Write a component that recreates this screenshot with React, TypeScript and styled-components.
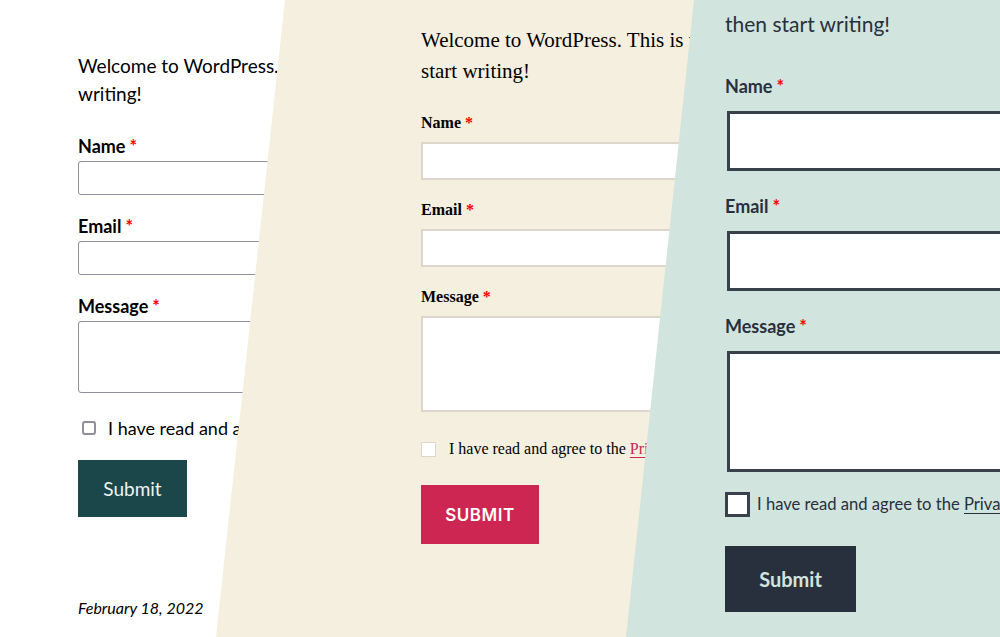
import React from 'react'
import styled, { createGlobalStyle, ThemeProvider } from 'styled-components'

interface FormTheme {
  bg: string
  text: string
  font: string
  padTop: number
  padLeft: number
  bodySize: number
  bodyLine: number
  paraGap: number
  paraWidth: number
  labelSize: number
  labelWeight: number
  labelLine: number
  labelGap: number
  fieldGap: number
  inputHeight: number
  areaHeight: number
  inputBorder: string
  inputRadius: number
  inputOffset: number
  checkGap: number
  checkLine: number
  checkSize: number
  checkBorder: string
  checkRadius: number
  checkOffset: number
  checkTextGap: number
  checkFont: number
  linkColor: string
  buttonGap: number
  buttonBg: string
  buttonColor: string
  buttonFont: string
  buttonSize: number
  buttonWeight: number
  buttonWidth: number
  buttonHeight: number
  buttonCase: string
  buttonSpacing: string
}

const UBUNTU_LIKE = "Lato, 'Open Sans', sans-serif"

const plain: FormTheme = {
  bg: '#ffffff',
  text: '#000000',
  font: UBUNTU_LIKE,
  padTop: 52,
  padLeft: 78,
  bodySize: 19,
  bodyLine: 28,
  paraGap: 27,
  paraWidth: 205,
  labelSize: 18,
  labelWeight: 700,
  labelLine: 22,
  labelGap: 4,
  fieldGap: 20,
  inputHeight: 34,
  areaHeight: 72,
  inputBorder: '1px solid #8f8f9d',
  inputRadius: 3,
  inputOffset: 0,
  checkGap: 23,
  checkLine: 24,
  checkSize: 14,
  checkBorder: '2px solid #8f8f9d',
  checkRadius: 3,
  checkOffset: 4,
  checkTextGap: 12,
  checkFont: 18,
  linkColor: '#000000',
  buttonGap: 20,
  buttonBg: '#1c474a',
  buttonColor: '#eef4f4',
  buttonFont: UBUNTU_LIKE,
  buttonSize: 19,
  buttonWeight: 400,
  buttonWidth: 109,
  buttonHeight: 57,
  buttonCase: 'none',
  buttonSpacing: 'normal',
}

const twenty: FormTheme = {
  bg: '#f5efe0',
  text: '#000000',
  font: "'Liberation Serif', 'Times New Roman', serif",
  padTop: 25,
  padLeft: 421,
  bodySize: 21,
  bodyLine: 31,
  paraGap: 26,
  paraWidth: 270,
  labelSize: 16,
  labelWeight: 700,
  labelLine: 20,
  labelGap: 9,
  fieldGap: 20,
  inputHeight: 38,
  areaHeight: 96,
  inputBorder: '2px solid #dcd7ca',
  inputRadius: 0,
  inputOffset: 0,
  checkGap: 27,
  checkLine: 20,
  checkSize: 15,
  checkBorder: '1px solid #dcd7ca',
  checkRadius: 0,
  checkOffset: 0,
  checkTextGap: 13,
  checkFont: 16,
  linkColor: '#cd2653',
  buttonGap: 26,
  buttonBg: '#cd2653',
  buttonColor: '#ffffff',
  buttonFont: "Inter, 'Liberation Sans', sans-serif",
  buttonSize: 17,
  buttonWeight: 600,
  buttonWidth: 118,
  buttonHeight: 59,
  buttonCase: 'uppercase',
  buttonSpacing: '0.03em',
}

const twentyOne: FormTheme = {
  bg: '#d1e4dd',
  text: '#28303d',
  font: UBUNTU_LIKE,
  padTop: 7,
  padLeft: 725,
  bodySize: 21,
  bodyLine: 34,
  paraGap: 33,
  paraWidth: 275,
  labelSize: 18,
  labelWeight: 700,
  labelLine: 24,
  labelGap: 13,
  fieldGap: 23,
  inputHeight: 60,
  areaHeight: 121,
  inputBorder: '3px solid #39414d',
  inputRadius: 0,
  inputOffset: 2,
  checkGap: 20,
  checkLine: 25,
  checkSize: 25,
  checkBorder: '3px solid #39414d',
  checkRadius: 0,
  checkOffset: 0,
  checkTextGap: 7,
  checkFont: 16.6,
  linkColor: '#28303d',
  buttonGap: 29,
  buttonBg: '#28303d',
  buttonColor: '#d1e4dd',
  buttonFont: UBUNTU_LIKE,
  buttonSize: 20,
  buttonWeight: 700,
  buttonWidth: 131,
  buttonHeight: 66,
  buttonCase: 'none',
  buttonSpacing: 'normal',
}

const GlobalStyle = createGlobalStyle`
  html, body {
    margin: 0;
    padding: 0;
    background: #ffffff;
  }
`

const Stage = styled.main`
  display: grid;
  width: 1000px;
  height: 637px;
  overflow: hidden;
`

// each theme preview is a full-size layer, cut with a slanted left edge
const Panel = styled.section<{ $clip?: string }>`
  grid-area: 1 / 1;
  display: flex;
  flex-direction: column;
  align-items: flex-start;
  min-width: 0;
  overflow: hidden;
  padding: ${({ theme }) => `${theme.padTop}px 0 0 ${theme.padLeft}px`};
  background: ${({ theme }) => theme.bg};
  color: ${({ theme }) => theme.text};
  font-family: ${({ theme }) => theme.font};
  clip-path: ${({ $clip }) => $clip || 'none'};
`

// the paragraph runs on under the next layer, so it is cut where that layer starts
const Para = styled.p`
  max-width: ${({ theme }) => theme.paraWidth}px;
  margin: 0 0 ${({ theme }) => theme.paraGap}px;
  overflow: hidden;
  font-size: ${({ theme }) => theme.bodySize}px;
  line-height: ${({ theme }) => theme.bodyLine}px;
`

const Line = styled.span`
  display: block;
  white-space: nowrap;
`

const Field = styled.div`
  display: flex;
  flex-direction: column;
  align-items: flex-start;
  &:not(:first-of-type) {
    margin-top: ${({ theme }) => theme.fieldGap}px;
  }
`

const Label = styled.label`
  display: block;
  height: ${({ theme }) => theme.labelLine}px;
  margin-bottom: ${({ theme }) => theme.labelGap}px;
  font-size: ${({ theme }) => theme.labelSize}px;
  font-weight: ${({ theme }) => theme.labelWeight};
  line-height: ${({ theme }) => theme.labelLine}px;
  white-space: nowrap;
`

const Required = styled.span`
  margin-left: 4px;
  color: #ff0000;
`

const TextInput = styled.input`
  display: block;
  box-sizing: border-box;
  width: 560px;
  height: ${({ theme }) => theme.inputHeight}px;
  margin: 0 0 0 ${({ theme }) => theme.inputOffset}px;
  border: ${({ theme }) => theme.inputBorder};
  border-radius: ${({ theme }) => theme.inputRadius}px;
  background: #ffffff;
`

const TextArea = styled.textarea`
  display: block;
  box-sizing: border-box;
  width: 560px;
  height: ${({ theme }) => theme.areaHeight}px;
  margin: 0 0 0 ${({ theme }) => theme.inputOffset}px;
  border: ${({ theme }) => theme.inputBorder};
  border-radius: ${({ theme }) => theme.inputRadius}px;
  background: #ffffff;
  resize: none;
`

const CheckRow = styled.div`
  display: flex;
  align-items: center;
  margin-top: ${({ theme }) => theme.checkGap}px;
  line-height: ${({ theme }) => theme.checkLine}px;
  font-size: ${({ theme }) => theme.checkFont}px;
  white-space: nowrap;
`

const Check = styled.input`
  appearance: none;
  box-sizing: border-box;
  flex: none;
  width: ${({ theme }) => theme.checkSize}px;
  height: ${({ theme }) => theme.checkSize}px;
  margin: 0 ${({ theme }) => theme.checkTextGap}px 0 ${({ theme }) => theme.checkOffset}px;
  border: ${({ theme }) => theme.checkBorder};
  border-radius: ${({ theme }) => theme.checkRadius}px;
  background: #ffffff;
`

const PolicyLink = styled.a`
  color: ${({ theme }) => theme.linkColor};
  text-decoration: underline;
  text-underline-offset: 3px;
`

const SubmitButton = styled.button`
  box-sizing: border-box;
  width: ${({ theme }) => theme.buttonWidth}px;
  height: ${({ theme }) => theme.buttonHeight}px;
  margin-top: ${({ theme }) => theme.buttonGap}px;
  padding: 0;
  border: none;
  border-radius: 0;
  background: ${({ theme }) => theme.buttonBg};
  color: ${({ theme }) => theme.buttonColor};
  font-family: ${({ theme }) => theme.buttonFont};
  font-size: ${({ theme }) => theme.buttonSize}px;
  font-weight: ${({ theme }) => theme.buttonWeight};
  letter-spacing: ${({ theme }) => theme.buttonSpacing};
  text-transform: ${({ theme }) => theme.buttonCase};
`

const PostDate = styled.time`
  margin-top: 81px;
  font-size: 16px;
  font-style: italic;
  line-height: 20px;
`

interface FormProps {
  lines: string[]
}

const CommentForm = ({ lines }: FormProps) => (
  <>
    <Para>
      {lines.map(line => (
        <Line key={line}>{line}</Line>
      ))}
    </Para>
    <Field>
      <Label>
        Name<Required>*</Required>
      </Label>
      <TextInput type="text" />
    </Field>
    <Field>
      <Label>
        Email<Required>*</Required>
      </Label>
      <TextInput type="email" />
    </Field>
    <Field>
      <Label>
        Message<Required>*</Required>
      </Label>
      <TextArea />
    </Field>
    <CheckRow>
      <Check type="checkbox" />
      <span>
        I have read and agree to the <PolicyLink href="#">Privacy Policy</PolicyLink>
      </span>
    </CheckRow>
    <SubmitButton type="button">Submit</SubmitButton>
  </>
)

const App = () => (
  <>
    <GlobalStyle />
    <Stage>
      <ThemeProvider theme={plain}>
        <Panel>
          <CommentForm lines={['Welcome to WordPress. This', 'writing!']} />
          <PostDate>February 18, 2022</PostDate>
        </Panel>
      </ThemeProvider>
      <ThemeProvider theme={twenty}>
        <Panel $clip="polygon(285px 0, 100% 0, 100% 100%, 216px 100%)">
          <CommentForm lines={['Welcome to WordPress. This is your', 'start writing!']} />
        </Panel>
      </ThemeProvider>
      <ThemeProvider theme={twentyOne}>
        <Panel $clip="polygon(694px 0, 100% 0, 100% 100%, 626px 100%)">
          <CommentForm lines={['then start writing!']} />
        </Panel>
      </ThemeProvider>
    </Stage>
  </>
)

export default App
